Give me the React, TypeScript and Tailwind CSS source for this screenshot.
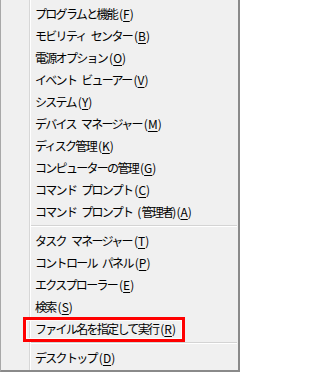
import React from 'react';

type Item = { label: string; key: string };

const groups: Item[][] = [
  [
    { label: 'プログラムと機能', key: 'F' },
    { label: 'モビリティ センター', key: 'B' },
    { label: '電源オプション', key: 'O' },
    { label: 'イベント ビューアー', key: 'V' },
    { label: 'システム', key: 'Y' },
    { label: 'デバイス マネージャー', key: 'M' },
    { label: 'ディスク管理', key: 'K' },
    { label: 'コンピューターの管理', key: 'G' },
    { label: 'コマンド プロンプト', key: 'C' },
    { label: 'コマンド プロンプト (管理者)', key: 'A' },
  ],
  [
    { label: 'タスク マネージャー', key: 'T' },
    { label: 'コントロール パネル', key: 'P' },
    { label: 'エクスプローラー', key: 'E' },
    { label: '検索', key: 'S' },
    { label: 'ファイル名を指定して実行', key: 'R' },
  ],
  [{ label: 'デスクトップ', key: 'D' }],
];

function MenuItem({ item }: { item: Item }) {
  const words = item.label.split(' ');
  const endsWithParen = item.label.endsWith(')');
  return (
    <div className="h-[22px] leading-[22px] pl-[4px] text-[12px] text-black whitespace-nowrap">
      {words.map((w, i) => (
        <React.Fragment key={i}>
          {i > 0 && <span className="inline-block w-[5px]" />}
          {w.split(/([()])/).filter(Boolean).map((part, j) =>
            part === '(' || part === ')' ? (
              <span key={j}>{part}</span>
            ) : (
              <span key={j} className="tracking-[-1.7px]">{part}</span>
            )
          )}
        </React.Fragment>
      ))}
      <span className={endsWithParen ? '' : 'ml-[2px]'}>(</span>
      <span className="underline underline-offset-2">{item.key}</span>)
    </div>
  );
}

function Separator() {
  return (
    <div className="h-[7px] pt-[2px] mr-[1px]">
      <div className="h-px bg-[#d4d4d4]" />
      <div className="h-px bg-white" />
    </div>
  );
}

export default function App() {
  return (
    <div
      className="relative w-[240px] h-[372px] bg-[#f0f0f0] border-l border-l-[#a8a8a8] border-r-2 border-r-[#8a8a8a] border-b-2 border-b-[#8a8a8a] flex overflow-hidden"
      style={{ fontFamily: '"Noto Sans CJK JP", "Noto Sans", sans-serif' }}
    >
      {/* colonne des icônes (vide) */}
      <div className="w-[29px] shrink-0 border-r border-r-[#d7d7d7]" />
      <div className="flex-1 border-l border-l-white pt-[3px]">
        {groups.map((group, gi) => (
          <div key={gi}>
            {gi > 0 && <Separator />}
            {group.map((item) => (
              <MenuItem key={item.key} item={item} />
            ))}
          </div>
        ))}
      </div>

      {/* cadre rouge autour de "ファイル名を指定して実行" */}
      <div className="absolute left-[22px] top-[317px] w-[162px] h-[25px] border-[3px] border-[#ff0000]">
        <div className="w-full h-full border border-[#fbfbfb]" />
      </div>
    </div>
  );
}
